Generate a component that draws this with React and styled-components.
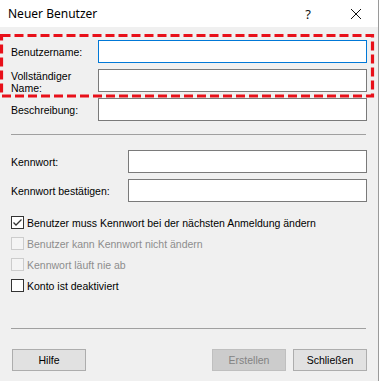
import styled, { createGlobalStyle } from 'styled-components';

const GlobalStyle = createGlobalStyle`
  html, body { margin: 0; padding: 0; background: #f0f0f0; }
  * { box-sizing: border-box; }
`;

const CheckBox = ({ checked, disabled, label }) => (
  <CheckRow $disabled={disabled}>
    <Box $disabled={disabled}>
      {checked && (
        <svg width="11" height="11" viewBox="0 0 11 11">
          <path d="M1.5 5.5 L4 8 L9.5 2.5" fill="none" stroke="#333" strokeWidth="1.3" />
        </svg>
      )}
    </Box>
    <span>{label}</span>
  </CheckRow>
);

const App = () => {
  return (
    <Window>
      <GlobalStyle />
      <TitleBar>
        <Title>Neuer Benutzer</Title>
        <TitleButtons>
          <HelpMark>?</HelpMark>
          <svg width="12" height="12" viewBox="0 0 12 12">
            <path d="M1 1 L11 11 M11 1 L1 11" stroke="#111" strokeWidth="1" />
          </svg>
        </TitleButtons>
      </TitleBar>

      <Body>
        <FieldGrid $labelWidth={87}>
          <Label>Benutzername:</Label>
          <Input $focused />
          <Label $shift>Vollständiger Name:</Label>
          <Input />
          <Label>Beschreibung:</Label>
          <Input />
        </FieldGrid>

        <Divider $top={13} />

        <FieldGrid $labelWidth={117} $top={15}>
          <Label>Kennwort:</Label>
          <Input />
          <Label>Kennwort bestätigen:</Label>
          <Input />
        </FieldGrid>

        <Checks>
          <CheckBox checked label="Benutzer muss Kennwort bei der nächsten Anmeldung ändern" />
          <CheckBox disabled label="Benutzer kann Kennwort nicht ändern" />
          <CheckBox disabled label="Kennwort läuft nie ab" />
          <CheckBox label="Konto ist deaktiviert" />
        </Checks>

        <Divider $top={32} />

        <ButtonRow>
          <Button>Hilfe</Button>
          <Spacer />
          <Button disabled>Erstellen</Button>
          <Button>Schließen</Button>
        </ButtonRow>
      </Body>

      <Highlight width="379" height="100">
        <rect x="1.5" y="35.5" width="371" height="60.5" fill="none" stroke="#e8101a" strokeWidth="3.2" strokeDasharray="9 4" />
      </Highlight>
    </Window>
  );
};

const Window = styled.div`
  position: relative;
  width: 379px;
  height: 381px;
  background: #f0f0f0;
  border-right: 1px solid #9a9a9a;
  font-family: "Liberation Sans", Arial, sans-serif;
  font-size: 10.5px;
  color: #000;
  overflow: hidden;
`;

const TitleBar = styled.div`
  height: 27px;
  background: #fff;
  display: flex;
  align-items: center;
  justify-content: space-between;
  padding: 0 0 0 8px;
`;

const Title = styled.div`
  font-family: "Noto Sans", "Open Sans", sans-serif;
  font-size: 12px;
  color: #000;
`;

const TitleButtons = styled.div`
  display: flex;
  align-items: center;
  gap: 39px;
  padding-right: 16px;
`;

const HelpMark = styled.span`
  font-family: "Noto Sans", sans-serif;
  font-size: 13px;
  color: #111;
`;

const Body = styled.div`
  padding: 13px 11px 0 11px;
`;

const FieldGrid = styled.div`
  display: grid;
  grid-template-columns: ${({ $labelWidth }) => $labelWidth}px 1fr;
  grid-auto-rows: 23px;
  row-gap: 6px;
  margin-top: ${({ $top }) => $top || 0}px;
`;

const Label = styled.div`
  display: flex;
  align-items: center;
  line-height: 12px;
  padding-right: 12px;
  padding-top: ${({ $shift }) => ($shift ? 3 : 0)}px;
`;

const Input = styled.div`
  background: #fff;
  border: 1px solid ${({ $focused }) => ($focused ? '#0078d7' : '#7a7a7a')};
`;

const Divider = styled.div`
  height: 1px;
  background: #a0a0a0;
  margin-top: ${({ $top }) => $top}px;
  margin-right: 1px;
`;

const Checks = styled.div`
  display: flex;
  flex-direction: column;
  margin-top: 10px;
`;

const CheckRow = styled.div`
  height: 21px;
  display: flex;
  align-items: center;
  gap: 3px;
  color: ${({ $disabled }) => ($disabled ? '#8d8d8d' : '#000')};
`;

const Box = styled.div`
  width: 13px;
  height: 13px;
  display: flex;
  align-items: center;
  justify-content: center;
  border: 1px solid ${({ $disabled }) => ($disabled ? '#cccccc' : '#333')};
  background: ${({ $disabled }) => ($disabled ? '#f4f4f4' : '#fff')};
`;

const ButtonRow = styled.div`
  display: flex;
  gap: 7px;
  margin-top: 20px;
  padding-left: 1px;
`;

const Spacer = styled.div`
  flex: 1;
`;

const Button = styled.button`
  width: 74px;
  height: 22px;
  padding: 0;
  font-family: "Liberation Sans", Arial, sans-serif;
  font-size: 10.5px;
  color: #000;
  background: #e1e1e1;
  border: 1px solid #adadad;

  &:disabled {
    color: #838383;
    background: #cccccc;
    border-color: #bfbfbf;
  }
`;

const Highlight = styled.svg`
  position: absolute;
  left: 0;
  top: 0;
  pointer-events: none;
`;

export default App;
